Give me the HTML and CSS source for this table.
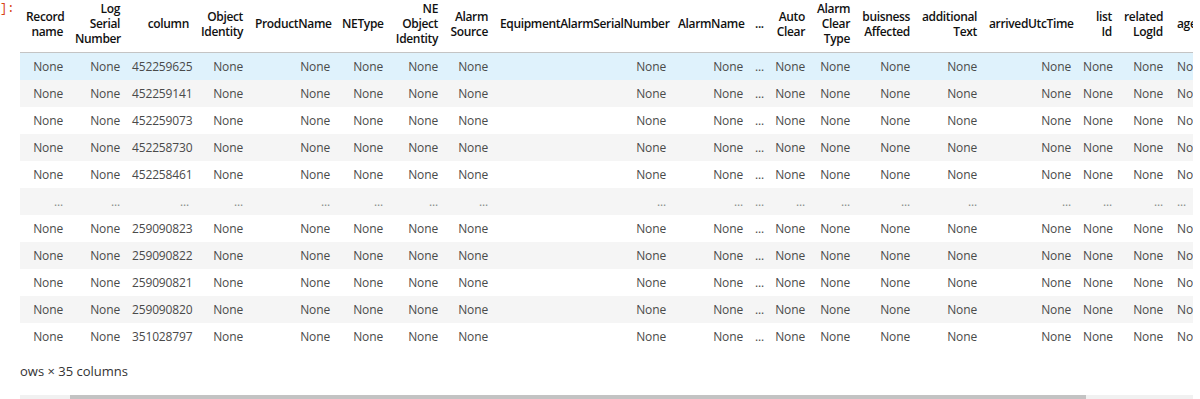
FILE: index.html
```html
<!DOCTYPE html>
<html lang="en">
<head>
    <meta charset="UTF-8">
    <title>Alarm log dataframe</title>
    <link rel="stylesheet" href="styles.css">
</head>
<body>

    <div class="cell-output">
        <div class="prompt">]:</div>

        <div class="output-area">
            <table class="dataframe">
                <colgroup>
                    <col class="w49"><col class="w57"><col class="w69"><col class="w54"><col class="w87">
                    <col class="w53"><col class="w55"><col class="w50"><col class="w178"><col class="w77">
                    <col class="w19"><col class="w43"><col class="w45"><col class="w60"><col class="w67">
                    <col class="w94"><col class="w41"><col class="w51"><col class="w60">
                </colgroup>
                <thead>
                    <tr>
                        <th>Record<br>name</th>
                        <th>Log<br>Serial<br>Number</th>
                        <th>column</th>
                        <th>Object<br>Identity</th>
                        <th>ProductName</th>
                        <th>NEType</th>
                        <th>NE<br>Object<br>Identity</th>
                        <th>Alarm<br>Source</th>
                        <th>EquipmentAlarmSerialNumber</th>
                        <th>AlarmName</th>
                        <th>...</th>
                        <th>Auto<br>Clear</th>
                        <th>Alarm<br>Clear<br>Type</th>
                        <th>buisness<br>Affected</th>
                        <th>additional<br>Text</th>
                        <th>arrivedUtcTime</th>
                        <th>list<br>Id</th>
                        <th>related<br>LogId</th>
                        <th class="left">agent</th>
                    </tr>
                </thead>
                <tbody>
                    <tr class="hover"><td>None</td><td>None</td><td>452259625</td><td>None</td><td>None</td><td>None</td><td>None</td><td>None</td><td>None</td><td>None</td><td>...</td><td>None</td><td>None</td><td>None</td><td>None</td><td>None</td><td>None</td><td>None</td><td class="left">None</td></tr>
                    <tr><td>None</td><td>None</td><td>452259141</td><td>None</td><td>None</td><td>None</td><td>None</td><td>None</td><td>None</td><td>None</td><td>...</td><td>None</td><td>None</td><td>None</td><td>None</td><td>None</td><td>None</td><td>None</td><td class="left">None</td></tr>
                    <tr><td>None</td><td>None</td><td>452259073</td><td>None</td><td>None</td><td>None</td><td>None</td><td>None</td><td>None</td><td>None</td><td>...</td><td>None</td><td>None</td><td>None</td><td>None</td><td>None</td><td>None</td><td>None</td><td class="left">None</td></tr>
                    <tr><td>None</td><td>None</td><td>452258730</td><td>None</td><td>None</td><td>None</td><td>None</td><td>None</td><td>None</td><td>None</td><td>...</td><td>None</td><td>None</td><td>None</td><td>None</td><td>None</td><td>None</td><td>None</td><td class="left">None</td></tr>
                    <tr><td>None</td><td>None</td><td>452258461</td><td>None</td><td>None</td><td>None</td><td>None</td><td>None</td><td>None</td><td>None</td><td>...</td><td>None</td><td>None</td><td>None</td><td>None</td><td>None</td><td>None</td><td>None</td><td class="left">None</td></tr>
                    <tr class="gap"><td>...</td><td>...</td><td>...</td><td>...</td><td>...</td><td>...</td><td>...</td><td>...</td><td>...</td><td>...</td><td>...</td><td>...</td><td>...</td><td>...</td><td>...</td><td>...</td><td>...</td><td>...</td><td class="left">...</td></tr>
                    <tr><td>None</td><td>None</td><td>259090823</td><td>None</td><td>None</td><td>None</td><td>None</td><td>None</td><td>None</td><td>None</td><td>...</td><td>None</td><td>None</td><td>None</td><td>None</td><td>None</td><td>None</td><td>None</td><td class="left">None</td></tr>
                    <tr><td>None</td><td>None</td><td>259090822</td><td>None</td><td>None</td><td>None</td><td>None</td><td>None</td><td>None</td><td>None</td><td>...</td><td>None</td><td>None</td><td>None</td><td>None</td><td>None</td><td>None</td><td>None</td><td class="left">None</td></tr>
                    <tr><td>None</td><td>None</td><td>259090821</td><td>None</td><td>None</td><td>None</td><td>None</td><td>None</td><td>None</td><td>None</td><td>...</td><td>None</td><td>None</td><td>None</td><td>None</td><td>None</td><td>None</td><td>None</td><td class="left">None</td></tr>
                    <tr><td>None</td><td>None</td><td>259090820</td><td>None</td><td>None</td><td>None</td><td>None</td><td>None</td><td>None</td><td>None</td><td>...</td><td>None</td><td>None</td><td>None</td><td>None</td><td>None</td><td>None</td><td>None</td><td class="left">None</td></tr>
                    <tr><td>None</td><td>None</td><td>351028797</td><td>None</td><td>None</td><td>None</td><td>None</td><td>None</td><td>None</td><td>None</td><td>...</td><td>None</td><td>None</td><td>None</td><td>None</td><td>None</td><td>None</td><td>None</td><td class="left">None</td></tr>
                </tbody>
            </table>

            <p class="shape">ows × 35 columns</p>

            <!-- horizontal scrollbar of the output -->
            <div class="hscroll"><div class="thumb"></div></div>
        </div>
    </div>

</body>
</html>
```

FILE: styles.css
```css
* {
    box-sizing: border-box;
}

body {
    margin: 0;
    background-color: #fff;
    font-family: 'Open Sans', 'Noto Sans', sans-serif;
    color: #222;
    overflow: hidden;
}

.cell-output {
    display: flex;
}

.prompt {
    width: 20px;
    flex: none;
    padding-top: 1px;
    font-family: 'Liberation Mono', monospace;
    font-size: 12px;
    line-height: 16px;
    color: #d84315;
}

.output-area {
    width: 1173px;
    overflow: hidden;
}

/* dataframe table */
.dataframe {
    table-layout: fixed;
    width: 1209px;
    border-collapse: collapse;
    border-spacing: 0;
    font-size: 12px;
}

.dataframe th,
.dataframe td {
    text-align: right;
    vertical-align: middle;
    white-space: nowrap;
    padding: 6px 6px;
    line-height: 15px;
}

.dataframe th {
    padding: 1px 6px 5px;
    font-weight: 600;
    letter-spacing: -0.35px;
    color: #111;
}

.dataframe thead tr {
    height: 52px;
    border-bottom: 1px solid #c4c4c4;
}

.dataframe td {
    color: #4a4a4a;
    letter-spacing: -0.15px;
}

.dataframe .left {
    text-align: left;
    padding-left: 8px;
}

.dataframe tbody tr:nth-child(even) {
    background-color: #f5f5f5;
}

.dataframe tbody tr.hover {
    background-color: #dff2fc;
}

.dataframe tr.gap td {
    color: #8a8a8a;
}

/* column widths */
.w19 { width: 19px; }
.w41 { width: 41px; }
.w43 { width: 43px; }
.w45 { width: 45px; }
.w49 { width: 49px; }
.w50 { width: 50px; }
.w51 { width: 51px; }
.w53 { width: 53px; }
.w54 { width: 54px; }
.w55 { width: 55px; }
.w57 { width: 57px; }
.w60 { width: 60px; }
.w67 { width: 67px; }
.w69 { width: 69px; }
.w77 { width: 77px; }
.w87 { width: 87px; }
.w94 { width: 94px; }
.w178 { width: 178px; }

.shape {
    margin: 12px 0 0;
    font-size: 13px;
    line-height: 18px;
    color: #333;
}

.hscroll {
    margin-top: 15px;
    height: 12px;
    background-color: #f1f1f1;
    padding-left: 50px;
}

.thumb {
    width: 1016px;
    height: 100%;
    background-color: #c3c3c3;
}
```
